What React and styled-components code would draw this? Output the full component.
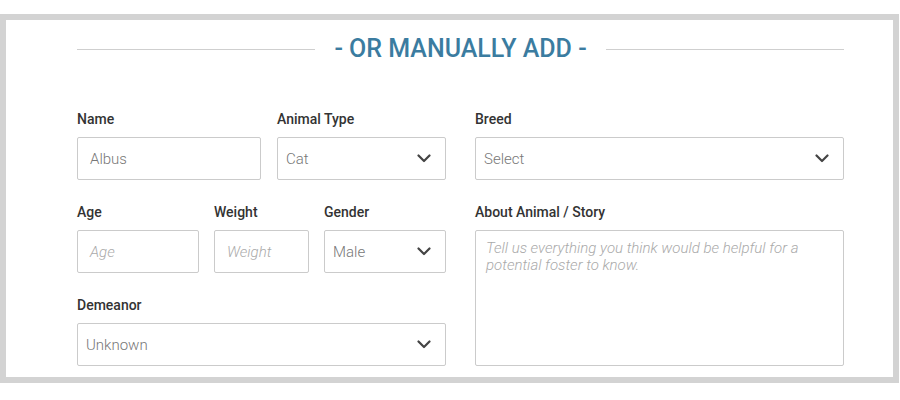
import React from 'react';
import styled, { createGlobalStyle } from 'styled-components';

const GlobalStyle = createGlobalStyle`
  body {
    margin: 0;
    background: #ffffff;
    font-family: Roboto, 'Liberation Sans', sans-serif;
  }
`;

const Panel = styled.div`
  box-sizing: border-box;
  width: 899px;
  height: 369px;
  margin-top: 14px;
  border: 6px solid #d3d3d3;
  background: #fff;
  padding: 14px 49px 0 71px;
`;

const Divider = styled.div`
  display: flex;
  align-items: center;
  gap: 19px;
  margin-bottom: 47px;

  &::before, &::after {
    content: '';
    flex: 1;
    height: 1px;
    background: #cfcfcf;
  }
`;

const Heading = styled.h2`
  margin: 0;
  font-size: 25px;
  line-height: 30px;
  font-weight: 500;
  color: #3b7ca0;
`;

const FormGrid = styled.div`
  display: grid;
  grid-template-columns: 369px 369px;
  column-gap: 29px;
`;

const Column = styled.div`
  display: flex;
  flex-direction: column;
  gap: 24px;
`;

const Row = styled.div`
  display: flex;
  gap: ${p => p.gap || 15}px;
`;

const Field = styled.div`
  display: flex;
  flex-direction: column;
  width: ${p => (p.w ? `${p.w}px` : 'auto')};
  flex: ${p => (p.w ? 'none' : '1 1 0')};
`;

const StackField = styled.div`
  display: flex;
  flex-direction: column;
  flex: ${p => (p.grow ? 1 : 'none')};
`;

const Label = styled.label`
  font-size: 14px;
  line-height: 17px;
  font-weight: 500;
  color: #333;
  margin-bottom: 9px;
`;

const Box = styled.div`
  box-sizing: border-box;
  height: 43px;
  border: 1px solid #cbcbcb;
  border-radius: 2px;
  display: flex;
  align-items: center;
  justify-content: space-between;
  padding: 0 ${p => (p.select ? 14 : 12)}px 0 ${p => (p.select ? 8 : 12)}px;
  font-size: 15px;
  font-weight: 300;
  color: ${p => (p.placeholder ? '#aaa' : '#777')};
  font-style: ${p => (p.placeholder ? 'italic' : 'normal')};
`;

const TextArea = styled.div`
  box-sizing: border-box;
  flex: 1;
  border: 1px solid #cbcbcb;
  border-radius: 2px;
  padding: 9px 24px 9px 10px;
  font-size: 15px;
  line-height: 17px;
  font-weight: 300;
  font-style: italic;
  color: #aaa;
`;

const Chevron = () => (
  <svg width="14" height="9" viewBox="0 0 14 9" fill="none">
    <path d="M1.5 1.5 L7 7 L12.5 1.5" stroke="#444" strokeWidth="2.2" strokeLinecap="round" strokeLinejoin="round" />
  </svg>
);

const Select = ({ children }) => (
  <Box select>
    <span>{children}</span>
    <Chevron />
  </Box>
);

export default function App() {
  return (
    <>
      <GlobalStyle />
      <Panel>
        <Divider>
          <Heading>- OR MANUALLY ADD -</Heading>
        </Divider>
        <FormGrid>
          <Column>
            <Row gap={16}>
              <Field w={184}>
                <Label>Name</Label>
                <Box>Albus</Box>
              </Field>
              <Field>
                <Label>Animal Type</Label>
                <Select>Cat</Select>
              </Field>
            </Row>
            <Row>
              <Field w={122}>
                <Label>Age</Label>
                <Box placeholder="true">Age</Box>
              </Field>
              <Field w={95}>
                <Label>Weight</Label>
                <Box placeholder="true">Weight</Box>
              </Field>
              <Field>
                <Label>Gender</Label>
                <Select>Male</Select>
              </Field>
            </Row>
            <StackField>
              <Label>Demeanor</Label>
              <Select>Unknown</Select>
            </StackField>
          </Column>
          <Column>
            <StackField>
              <Label>Breed</Label>
              <Select>Select</Select>
            </StackField>
            <StackField grow>
              <Label>About Animal / Story</Label>
              <TextArea>Tell us everything you think would be helpful for a potential foster to know.</TextArea>
            </StackField>
          </Column>
        </FormGrid>
      </Panel>
    </>
  );
}
